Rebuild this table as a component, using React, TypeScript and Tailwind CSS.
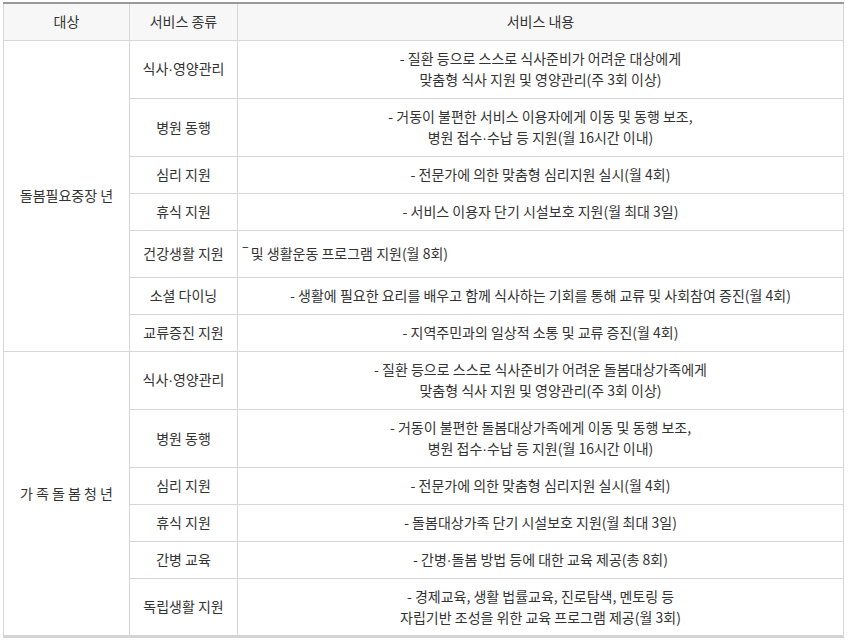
type Row = {
  kind: string;
  lines: string[];
  h: number;
  left?: boolean;
};

type Group = {
  target: string;
  rows: Row[];
};

const groups: Group[] = [
  {
    target: "돌봄필요중장 년",
    rows: [
      { kind: "식사·영양관리", lines: ["- 질환 등으로 스스로 식사준비가 어려운 대상에게", "맞춤형 식사 지원 및 영양관리(주 3회 이상)"], h: 58 },
      { kind: "병원 동행", lines: ["- 거동이 불편한 서비스 이용자에게 이동 및 동행 보조,", "병원 접수·수납 등 지원(월 16시간 이내)"], h: 58 },
      { kind: "심리 지원", lines: ["- 전문가에 의한 맞춤형 심리지원 실시(월 4회)"], h: 37 },
      { kind: "휴식 지원", lines: ["- 서비스 이용자 단기 시설보호 지원(월 최대 3일)"], h: 37 },
      { kind: "건강생활 지원", lines: ["‾ 및 생활운동 프로그램 지원(월 8회)"], h: 47, left: true },
      { kind: "소셜 다이닝", lines: ["- 생활에 필요한 요리를 배우고 함께 식사하는 기회를 통해 교류 및 사회참여 증진(월 4회)"], h: 37 },
      { kind: "교류증진 지원", lines: ["- 지역주민과의 일상적 소통 및 교류 증진(월 4회)"], h: 37 },
    ],
  },
  {
    target: "가 족 돌 봄 청 년",
    rows: [
      { kind: "식사·영양관리", lines: ["- 질환 등으로 스스로 식사준비가 어려운 돌봄대상가족에게", "맞춤형 식사 지원 및 영양관리(주 3회 이상)"], h: 58 },
      { kind: "병원 동행", lines: ["- 거동이 불편한 돌봄대상가족에게 이동 및 동행 보조,", "병원 접수·수납 등 지원(월 16시간 이내)"], h: 58 },
      { kind: "심리 지원", lines: ["- 전문가에 의한 맞춤형 심리지원 실시(월 4회)"], h: 37 },
      { kind: "휴식 지원", lines: ["- 돌봄대상가족 단기 시설보호 지원(월 최대 3일)"], h: 37 },
      { kind: "간병 교육", lines: ["- 간병·돌봄 방법 등에 대한 교육 제공(총 8회)"], h: 37 },
      { kind: "독립생활 지원", lines: ["- 경제교육, 생활 법률교육, 진로탐색, 멘토링 등", "자립기반 조성을 위한 교육 프로그램 제공(월 3회)"], h: 58 },
    ],
  },
];

// the middle dot is full width in the CJK font, so set it in a narrow latin face
function Dotted({ text }: { text: string }) {
  const parts = text.split("·");
  return (
    <>
      {parts.map((p, i) => (
        <span key={i}>
          {i > 0 ? <span className="font-['Liberation_Sans',sans-serif]">·</span> : null}
          {p}
        </span>
      ))}
    </>
  );
}

const cell = "border border-[#d6d6d6] align-middle leading-[21px]";

export default function App() {
  return (
    <div className="w-[848px] h-[641px] bg-white pt-[2px] pl-[3px] font-['Noto_Sans_CJK_KR',sans-serif] text-[14px] text-[#333]">
      <table className="w-[841px] border-collapse table-fixed border-t-2 border-t-[#9a9a9a] border-b-[3px] border-b-[#d4d4d4]">
        <colgroup>
          <col className="w-[126px]" />
          <col className="w-[108px]" />
          <col />
        </colgroup>
        <thead>
          <tr className="h-[37px] bg-[#f7f7f7]">
            <th className={`${cell} border-t-0 font-normal`}>대상</th>
            <th className={`${cell} border-t-0 font-normal`}>서비스 종류</th>
            <th className={`${cell} border-t-0 font-normal`}>서비스 내용</th>
          </tr>
        </thead>
        <tbody>
          {groups.map((g) =>
            g.rows.map((r, i) => (
              <tr key={g.target + r.kind} style={{ height: r.h }}>
                {i === 0 ? (
                  <td rowSpan={g.rows.length} className={`${cell} text-center p-0`}>
                    {g.target}
                  </td>
                ) : null}
                <td className={`${cell} text-center p-0`}>
                  <Dotted text={r.kind} />
                </td>
                <td className={r.left ? `${cell} text-left py-0 pl-[5px]` : `${cell} text-center p-0`}>
                  {r.lines.map((l) => (
                    <div key={l}>
                      <Dotted text={l} />
                    </div>
                  ))}
                </td>
              </tr>
            ))
          )}
        </tbody>
      </table>
    </div>
  );
}
